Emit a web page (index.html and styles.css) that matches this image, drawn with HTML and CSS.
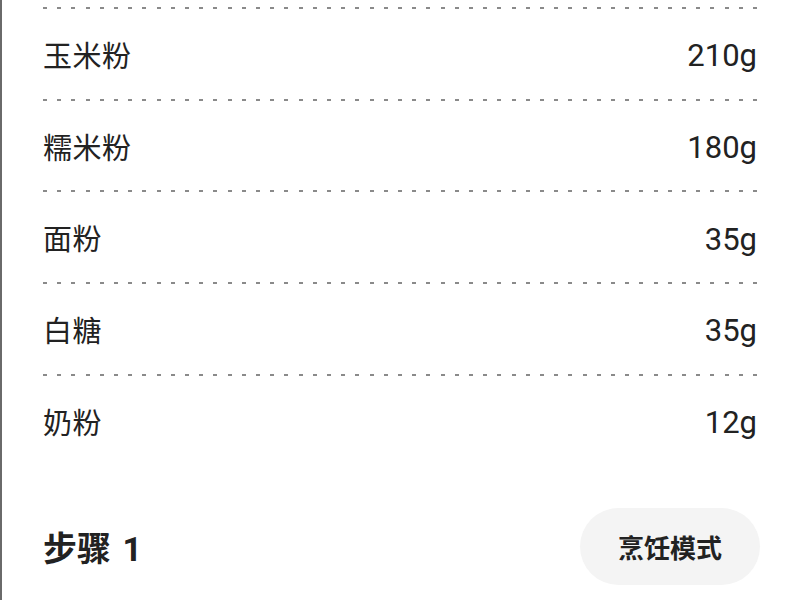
FILE: index.html
```html
<!DOCTYPE html>
<html lang="zh-CN">
<head>
<meta charset="utf-8">
<link rel="stylesheet" href="styles.css">
</head>
<body>
<div class="page">
  <div class="list">
    <div class="sep"></div>
    <div class="row"><span class="name">玉米粉</span><span class="qty">210g</span></div>
    <div class="sep"></div>
    <div class="row"><span class="name">糯米粉</span><span class="qty">180g</span></div>
    <div class="sep"></div>
    <div class="row"><span class="name">面粉</span><span class="qty">35g</span></div>
    <div class="sep"></div>
    <div class="row"><span class="name">白糖</span><span class="qty">35g</span></div>
    <div class="sep"></div>
    <div class="row"><span class="name">奶粉</span><span class="qty">12g</span></div>
  </div>
  <div class="step">
    <h2 class="step-title">步骤 1</h2>
    <button class="mode-btn">烹饪模式</button>
  </div>
</div>
</body>
</html>
```
FILE: styles.css
```css
html, body {
  margin: 0;
  padding: 0;
  background: #fff;
}
body {
  font-family: Roboto, "Noto Sans CJK SC", sans-serif;
  color: #222;
  width: 800px;
  height: 600px;
  overflow: hidden;
}
.page {
  box-sizing: border-box;
  height: 600px;
  border-left: 2px solid #6a6a6a;
  padding: 7px 43px 0 41px;
}
.sep {
  height: 2px;
  background-image: repeating-linear-gradient(to right, #8a8a8a 0 4px, transparent 4px 14.2px);
}
.row {
  height: 89.7px;
  display: flex;
  align-items: center;
  justify-content: space-between;
  font-size: 29px;
}
.name {
  letter-spacing: 0.5px;
}
.qty {
  font-size: 31px;
  padding-top: 4px;
}
.step {
  display: flex;
  align-items: center;
  justify-content: space-between;
  margin-top: 43px;
}
.step-title {
  margin: 0;
  font-size: 34px;
  font-weight: 700;
  word-spacing: 3px;
}
.mode-btn {
  border: none;
  background: #f4f4f4;
  border-radius: 40px;
  width: 180px;
  height: 77px;
  margin-right: -3px;
  font-family: "Noto Sans CJK SC", sans-serif;
  font-size: 26px;
  font-weight: 700;
  color: #222;
}
```
